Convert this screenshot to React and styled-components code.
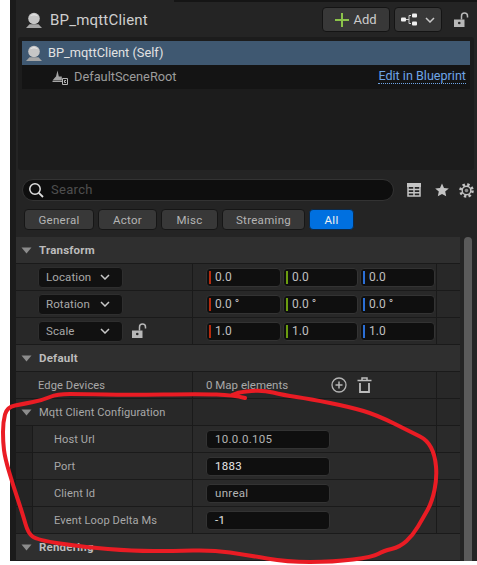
import styled, { createGlobalStyle } from "styled-components";

const GlobalStyle = createGlobalStyle`
html, body { margin: 0; padding: 0; background: #fff; }
body { width: 477px; height: 565px; overflow: hidden; font-family: Roboto, "Noto Sans", sans-serif; }
`

const RED = "#ea1c24"
const AXIS = { x: "#b52a0e", y: "#6b9c10", z: "#2b6fd6" }

// the hand drawn circle around the mqtt settings
const scribble = [
    [245, 398], [233, 395], [200, 394], [127, 395], [83, 394], [57, 394], [43, 400], [23, 404], [7, 407],
    [3, 422], [3, 442], [5, 458], [13, 485], [23, 515], [28, 533], [37, 540], [83, 547], [133, 551],
    [173, 551], [213, 550], [247, 555], [287, 562], [333, 562], [373, 557], [383, 551], [400, 547],
    [413, 535], [423, 518], [432, 502], [437, 478], [435, 455], [427, 440], [413, 433], [377, 415],
    [350, 407], [310, 399], [283, 395], [263, 390], [240, 392], [232, 395],
]

const smoothPath = (pts) => {
    let d = `M${pts[0][0]} ${pts[0][1]}`
    for (let i = 1; i < pts.length - 1; i++) {
        const mx = (pts[i][0] + pts[i + 1][0]) / 2
        const my = (pts[i][1] + pts[i + 1][1]) / 2
        d += `Q${pts[i][0]} ${pts[i][1]} ${mx} ${my}`
    }
    const last = pts[pts.length - 1]
    return d + `L${last[0]} ${last[1]}`
}

const Page = styled.div`
position: relative;
width: 477px;
height: 565px;
overflow: hidden;
background: #fff;
padding-left: 10px;
box-sizing: border-box;
`
const Panel = styled.div`
width: 467px;
height: 561px;
box-sizing: border-box;
display: flex;
flex-direction: column;
background: #242424;
border-left: 6px solid #1b1b1b;
`
const TopEdge = styled.div`
height: 2px;
margin-left: 158px;
background: #151515;
`
const Header = styled.div`
height: 35px;
padding: 1px 8px 0 10px;
box-sizing: border-box;
display: flex;
align-items: center;
`
const Title = styled.div`
margin-left: 8px;
flex: 1;
font-size: 15px;
color: #cfcfcf;
letter-spacing: 0.2px;
`
const AddButton = styled.div`
width: 68px;
height: 25px;
margin-right: 4px;
box-sizing: border-box;
display: flex;
align-items: center;
justify-content: center;
gap: 4px;
background: #383838;
border: 1px solid #141414;
border-radius: 4px;
color: #cccccc;
font-size: 13px;
`
const TreeButton = styled(AddButton)`
width: 48px;
margin-right: 12px;
gap: 8px;
`
const Tree = styled.div`
margin-left: 2px;
width: 456px;
height: 134px;
box-sizing: border-box;
padding: 4px 0 0 4px;
background: #1c1c1c;
border-radius: 3px;
`
const TreeRow = styled.div`
height: 24px;
width: 448px;
box-sizing: border-box;
padding-left: ${p => p.$indent}px;
padding-right: 4px;
display: flex;
align-items: center;
gap: 6px;
font-size: 12.8px;
background: ${p => (p.$selected ? "#3f5871" : "#141414")};
color: ${p => (p.$selected ? "#e2e2e2" : "#9c9c9c")};
`
const Grow = styled.span`
flex: 1;
`
const BlueprintLink = styled.span`
font-size: 12.6px;
color: #6ea5e6;
border-bottom: 1px dotted #6ea5e6;
line-height: 14px;
`
const SearchRow = styled.div`
margin: 9px 0 8px 6px;
display: flex;
align-items: center;
`
const SearchBox = styled.div`
width: 372px;
height: 22px;
display: flex;
align-items: center;
gap: 7px;
padding: 0 0 1px 5px;
box-sizing: border-box;
background: #0e0e0e;
border: 1px solid #333;
border-radius: 11px;
color: #4e4e4e;
font-size: 13px;
letter-spacing: 0.3px;
`
const SearchTools = styled.div`
margin-left: 13px;
display: grid;
grid-template-columns: 28px 24px 15px;
align-items: center;
`
const FilterRow = styled.div`
display: flex;
gap: 4px;
margin: 0 0 7px 8px;
`
const FilterChip = styled.div`
height: 21px;
width: ${p => p.$w}px;
box-sizing: border-box;
display: flex;
align-items: center;
justify-content: center;
border-radius: 4px;
font-size: 11.5px;
letter-spacing: 0.3px;
background: ${p => (p.$on ? "#0070e0" : "#383838")};
border: 1px solid ${p => (p.$on ? "#0c2a4a" : "#161616")};
color: ${p => (p.$on ? "#f0f0f0" : "#b4b4b4")};
`
const Body = styled.div`
display: flex;
flex: 1;
`
const Sheet = styled.div`
width: 444px;
display: flex;
flex-direction: column;
`
const ScrollThumb = styled.div`
width: 8px;
margin-left: 4px;
background: #5a5a5a;
border-radius: 4px 4px 0 0;
`
const SectionRow = styled.div`
height: 27px;
box-sizing: border-box;
display: flex;
align-items: center;
gap: 7px;
padding-left: 5px;
background: #2f2f2f;
border-bottom: 1px solid #1a1a1a;
font-size: 11.5px;
font-weight: 700;
letter-spacing: 0.2px;
color: #bcbcbc;
`
const Row = styled.div`
height: 27px;
box-sizing: border-box;
display: grid;
grid-template-columns: 177px 1fr 23px;
background: ${p => (p.$nested ? "#2a2a2a" : "#282828")};
border-bottom: 1px solid #1a1a1a;
`
const NameCell = styled.div`
display: flex;
align-items: center;
gap: 9px;
padding-left: 22px;
border-right: 1px solid #1a1a1a;
font-size: 11.1px;
letter-spacing: 0.1px;
color: #a8a8a8;
`
const NestedName = styled(NameCell)`
padding-left: 21px;
border-left: 1px solid #1a1a1a;
box-shadow: -16px 0 0 #242424;
width: 161px;
box-sizing: border-box;
justify-self: end;
`
const GroupName = styled(NameCell)`
padding-left: 5px;
gap: 7px;
`
const ValueCell = styled.div`
display: flex;
align-items: center;
gap: 2px;
padding-left: 13px;
border-right: 1px solid #1a1a1a;
font-size: 11.5px;
color: #a8a8a8;
`
const Combo = styled.div`
width: 85px;
height: 21px;
box-sizing: border-box;
display: flex;
align-items: center;
justify-content: space-between;
padding: 0 12px 0 7px;
background: #111;
border: 1px solid #2e2e2e;
border-radius: 4px;
font-size: 11.5px;
`
const VectorInput = styled.div`
width: 75px;
height: 19px;
box-sizing: border-box;
display: flex;
align-items: center;
gap: 4px;
padding-left: 2px;
background: #0f0f0f;
border: 1px solid #333;
border-radius: 4px;
font-size: 12px;
color: #c0c0c0;
&::before {
  content: "";
  width: 2px;
  height: 13px;
  background: ${p => p.$axis};
}
`
const TextInput = styled.div`
width: 124px;
height: 19px;
box-sizing: border-box;
display: flex;
align-items: center;
padding-left: 8px;
background: #0f0f0f;
border: 1px solid #333;
border-radius: 4px;
font-size: 11.5px;
letter-spacing: 0.3px;
color: ${p => (p.$bright ? "#e8e8e8" : "#b4b4b4")};
`
const MapText = styled.span`
width: 123px;
`
const MapTools = styled.div`
display: flex;
align-items: center;
gap: 10px;
`
const Scribble = styled.svg`
position: absolute;
left: 0;
top: 0;
pointer-events: none;
`

const BlueprintIcon = () => (
    <svg width="16" height="16" viewBox="0 0 16 16">
        <circle cx="8" cy="6.500" r="5.800" fill="#c6c6c6" />
        <path d="M3.800 4.200a5 4.500 0 0 1 8.400 0a6 3 0 0 0-8.400 0z" fill="#f2f2f2" />
        <path d="M3.500 12.200h9L16 16H0z" fill="#a6a6a6" />
    </svg>
)

const SceneRootIcon = () => (
    <svg width="16" height="16" viewBox="0 0 16 16">
        <path d="M5.500 1.500l1.300 6h3v4H0.500L3 8.500l1-1z" fill="#a5a5a5" />
        <path d="M0.500 12.500H10" stroke="#a5a5a5" />
        <path d="M10.500 9.500h5v6h-5z" fill="none" stroke="#b5b5b5" />
        <path d="M14 11.500h-1.500v2H14" fill="none" stroke="#b5b5b5" />
    </svg>
)

const Plus = () => (
    <svg width="14" height="14" viewBox="0 0 14 14">
        <path d="M6 0h2v6h6v2H8v6H6V8H0V6h6z" fill="#8bc34a" />
    </svg>
)

const HierarchyIcon = () => (
    <svg width="16" height="13" viewBox="0 0 16 13">
        <path d="M4 6.500h4M8 2.500h2M8 10.500h2M8 2.500v8" stroke="#cfcfcf" fill="none" />
        <rect x="0" y="4.500" width="5" height="4" rx="1" fill="#f0f0f0" />
        <rect x="11" y="0.500" width="5" height="4" rx="1" fill="#f0f0f0" />
        <rect x="11" y="8.500" width="5" height="4" rx="1" fill="#f0f0f0" />
    </svg>
)

const Chevron = () => (
    <svg width="10" height="6" viewBox="0 0 10 6">
        <path d="M1 1l4 4 4-4" fill="none" stroke="#c8c8c8" strokeWidth="1.500" />
    </svg>
)

const Caret = () => (
    <svg width="11" height="7" viewBox="0 0 11 7">
        <path d="M0.500 0.500h10L5.500 6.500z" fill="#8c8c8c" />
    </svg>
)

const OpenLock = () => (
    <svg width="15" height="16" viewBox="0 0 15 16">
        <path d="M0 7.500h10.500V15H0z" fill="#b8b8b8" />
        <circle cx="5.250" cy="11" r="1.300" fill="#2a2a2a" />
        <path d="M7.500 7.500V4a3 3 0 0 1 6 0v1.500" fill="none" stroke="#b8b8b8" strokeWidth="1.500" />
    </svg>
)

const SearchIcon = () => (
    <svg width="16" height="16" viewBox="0 0 16 16">
        <circle cx="7" cy="7" r="5.200" fill="none" stroke="#e0e0e0" strokeWidth="1.500" />
        <path d="M10.800 10.800L15 15" stroke="#e0e0e0" strokeWidth="1.800" />
    </svg>
)

const TableIcon = () => (
    <svg width="14" height="14" viewBox="0 0 14 14">
        <path d="M0 0h14v4H0z" fill="#c4c4c4" />
        <path d="M1 1h12v12H1zM1 6.500h12M1 9.800h12M7 4v9" fill="none" stroke="#c4c4c4" strokeWidth="1.500" />
    </svg>
)

const StarIcon = () => (
    <svg width="14" height="14" viewBox="0 0 14 14">
        <path d="M7 0.500l2 4.400 4.800.5-3.600 3.200 1 4.700L7 10.900l-4.200 2.400 1-4.700L.2 5.400 5 4.900z" fill="#c4c4c4" />
    </svg>
)

const GearIcon = () => (
    <svg width="15" height="15" viewBox="0 0 15 15">
        <circle cx="7.500" cy="7.500" r="6" fill="none" stroke="#c4c4c4" strokeWidth="2.600" strokeDasharray="2.400 2.310" />
        <circle cx="7.500" cy="7.500" r="4.300" fill="none" stroke="#c4c4c4" strokeWidth="1.400" />
        <circle cx="7.500" cy="7.500" r="1.800" fill="#8a8a8a" />
    </svg>
)

const TrashIcon = () => (
    <svg width="15" height="16" viewBox="0 0 15 16">
        <path d="M0.500 3.500h14M5 3V1h5v2" fill="none" stroke="#bcbcbc" strokeWidth="1.500" />
        <path d="M3 6v9h9V6" fill="none" stroke="#bcbcbc" strokeWidth="1.800" />
    </svg>
)

const AddCircle = () => (
    <svg width="16" height="16" viewBox="0 0 16 16">
        <circle cx="8" cy="8" r="7" fill="none" stroke="#b4b4b4" strokeWidth="1.300" />
        <path d="M8 4.500v7M4.500 8h7" stroke="#b4b4b4" strokeWidth="1.500" />
    </svg>
)

const VectorRow = ({ label, value, lock }) => (
    <Row>
        <NameCell>
            <Combo>{label}<Chevron /></Combo>
            {lock && <OpenLock />}
        </NameCell>
        <ValueCell>
            <VectorInput $axis={AXIS.x}>{value}</VectorInput>
            <VectorInput $axis={AXIS.y}>{value}</VectorInput>
            <VectorInput $axis={AXIS.z}>{value}</VectorInput>
        </ValueCell>
        <div />
    </Row>
)

const ConfigRow = ({ label, value, bright }) => (
    <Row $nested>
        <NestedName>{label}</NestedName>
        <ValueCell><TextInput $bright={bright}>{value}</TextInput></ValueCell>
        <div />
    </Row>
)

const filters = [
    { label: "General", w: 70 },
    { label: "Actor", w: 59 },
    { label: "Misc", w: 57 },
    { label: "Streaming", w: 83 },
    { label: "All", w: 45, on: true },
]

const App = () => {
    return (
        <Page>
            <GlobalStyle />
            <Panel>
                <TopEdge />
                <Header>
                    <BlueprintIcon />
                    <Title>BP_mqttClient</Title>
                    <AddButton><Plus />Add</AddButton>
                    <TreeButton><HierarchyIcon /><Chevron /></TreeButton>
                    <OpenLock />
                </Header>
                <Tree>
                    <TreeRow $selected $indent={4}>
                        <BlueprintIcon />
                        BP_mqttClient (Self)
                    </TreeRow>
                    <TreeRow $indent={30}>
                        <SceneRootIcon />
                        DefaultSceneRoot
                        <Grow />
                        <BlueprintLink>Edit in Blueprint</BlueprintLink>
                    </TreeRow>
                </Tree>
                <SearchRow>
                    <SearchBox><SearchIcon />Search</SearchBox>
                    <SearchTools>
                        <TableIcon />
                        <StarIcon />
                        <GearIcon />
                    </SearchTools>
                </SearchRow>
                <FilterRow>
                    {filters.map((f) => (
                        <FilterChip key={f.label} $w={f.w} $on={f.on}>{f.label}</FilterChip>
                    ))}
                </FilterRow>
                <Body>
                    <Sheet>
                        <SectionRow><Caret />Transform</SectionRow>
                        <VectorRow label="Location" value="0.0" />
                        <VectorRow label="Rotation" value="0.0 °" />
                        <VectorRow label="Scale" value="1.0" lock />
                        <SectionRow><Caret />Default</SectionRow>
                        <Row>
                            <NameCell>Edge Devices</NameCell>
                            <ValueCell>
                                <MapText>0 Map elements</MapText>
                                <MapTools><AddCircle /><TrashIcon /></MapTools>
                            </ValueCell>
                            <div />
                        </Row>
                        <Row>
                            <GroupName><Caret />Mqtt Client Configuration</GroupName>
                            <ValueCell />
                            <div />
                        </Row>
                        <ConfigRow label="Host Url" value="10.0.0.105" />
                        <ConfigRow label="Port" value="1883" bright />
                        <ConfigRow label="Client Id" value="unreal" />
                        <ConfigRow label="Event Loop Delta Ms" value="-1" bright />
                        <SectionRow><Caret />Rendering</SectionRow>
                    </Sheet>
                    <ScrollThumb />
                </Body>
            </Panel>
            <Scribble width="477" height="565" viewBox="0 0 477 565">
                <path
                    d={smoothPath(scribble)}
                    fill="none"
                    stroke={RED}
                    strokeWidth="4"
                    strokeLinecap="round"
                    strokeLinejoin="round"
                />
            </Scribble>
        </Page>
    )
}

export default App;
